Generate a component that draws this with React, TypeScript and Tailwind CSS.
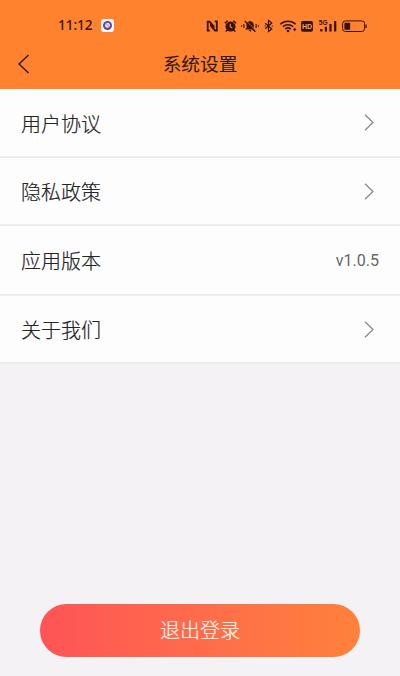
import React from "react";

const rows = [
  { label: "用户协议", height: "h-[69px]" },
  { label: "隐私政策", height: "h-[68px]" },
  { label: "应用版本", height: "h-[70px]", value: "v1.0.5" },
  { label: "关于我们", height: "h-[68px]" },
];

function StatusIcons() {
  return (
    <svg width="164" height="16" viewBox="0 0 164 16" fill="none" stroke="#351406">
      {/* NFC */}
      <path d="M4.8 12.7H2.7V3.6H4.5L8.6 8.2V10.8M9.7 3.4H11.8V12.5H10L5.9 7.9V5.4" strokeWidth="1.8" />

      {/* Alarm */}
      <circle cx="25.5" cy="8.6" r="5" fill="#351406" stroke="none" />
      <path d="M19.8 5.2L22.6 2.8M31.2 5.2L28.4 2.8M22 12L20.8 13.6M29 12L30.2 13.6" strokeWidth="1.5" />
      <path d="M25.3 5.8V8.8L27.3 10" stroke="#ff822e" strokeWidth="1.1" />

      {/* Muted bell */}
      <path d="M40.2 11.6L41.5 10V6.8C41.5 4.5 43 3.5 45 3.1C47.3 3.5 48.7 4.7 48.7 6.8V10L50 11.6ZM43.5 12.3H46.8L45.2 13.8Z" fill="#351406" stroke="none" />
      <path d="M41.2 2.8L51.2 13" stroke="#ff822e" strokeWidth=".8" />
      <path d="M39.8 3L50.4 13.7" strokeWidth="1.3" />
      <path d="M38.9 6V10M36.7 7.2V8.8M51.1 6V10M53.3 7.2V8.8" strokeWidth="1.1" />

      {/* Bluetooth */}
      <path d="M60.2 5.2L66.8 11L63.5 13.5V2.5L66.8 5L60.2 10.8" strokeWidth="1.2" />
      <path d="M59.7 8H60.9M66.7 8H67.9" strokeWidth="1.1" />

      {/* Wi-Fi */}
      <path d="M75.3 6.3C79.5 2.2 86.5 2.2 90.7 6.3M77.8 8.8C80.8 5.9 85.2 5.9 88.2 8.8M80.2 11.1C82 9.5 84 9.5 85.8 11.1" strokeWidth="1.5" />
      <circle cx="83" cy="13" r="1.3" fill="#351406" stroke="none" />
      <path d="M89.7 9.8L91.3 11.5L89.7 13.2L88.1 11.5Z" fill="#351406" stroke="none" />

      {/* HD */}
      <rect x="96" y="3" width="12" height="10.8" rx="2" fill="#351406" stroke="none" />
      <text x="102" y="11" textAnchor="middle" fill="#ff9b58" stroke="none" className="font-['Liberation_Sans'] text-[7px] font-bold">HD</text>

      {/* Signal */}
      <text x="113.8" y="7" fill="#351406" stroke="none" className="font-['Liberation_Sans'] text-[6.5px] font-bold">5G</text>
      <path d="M116.3 11V13.5M120.9 8.8V13.5M125.5 6V13.5M130.2 3V13.5" strokeWidth="2.2" />

      {/* Battery */}
      <rect x="137.6" y="2.9" width="22" height="10.6" rx="2.8" />
      <rect x="139.4" y="4.7" width="5.8" height="7" rx="1" fill="#351406" stroke="none" />
      <path d="M161 6.5V10" strokeWidth="1.2" />
    </svg>
  );
}

function App() {
  return (
    <div className="flex flex-col w-[400px] h-[676px] bg-[#f4f2f5] font-['Noto_Sans_CJK_SC',sans-serif]">
      <header className="h-[89px] bg-[#ff822e]">
        <div className="flex items-center h-[51px] pl-[58px] pr-[31px]">
          <span className="w-[43px] font-['Noto_Sans',sans-serif] text-[13.5px] font-medium text-[#351406]">
            11:12
          </span>
          <svg width="13" height="13" viewBox="0 0 13 13">
            <rect width="13" height="13" rx="3" fill="#fff8fb" />
            <circle cx="6.5" cy="6.5" r="4.5" fill="#5e469d" />
            <circle cx="6.5" cy="6.3" r="2.5" fill="#e6def5" />
            <path d="M4 3.8L9 8" stroke="#8b78bd" strokeWidth=".8" />
          </svg>
          <div className="ml-auto">
            <StatusIcons />
          </div>
        </div>

        <div className="flex items-center h-[26px] pl-[17px]">
          <svg width="13" height="20" viewBox="0 0 13 20" fill="none" stroke="#2c1710" strokeWidth="1.4">
            <path d="M11.5 1L2 10L11.5 19" />
          </svg>
          <h1 className="w-[340px] pb-0.5 text-center text-[18.7px] leading-[24px] text-[#2c1710]">
            系统设置
          </h1>
        </div>
      </header>

      <main className="flex flex-col">
        {rows.map((row) => (
          <div
            key={row.label}
            className={`${row.height} flex items-center justify-between border-b-2 border-[#ececed] bg-[#fdfdfd] pt-[2px] pl-[21px]`}
          >
            <span className="text-[20px] leading-[30px] font-light text-[#252525] [-webkit-text-stroke:0.2px_#252525]">
              {row.label}
            </span>
            {row.value ? (
              <span className="mr-[21px] font-[Roboto,sans-serif] text-[16px] text-[#666666]">
                {row.value}
              </span>
            ) : (
              <svg className="mr-[26px] mb-0.5" width="10" height="17" viewBox="0 0 10 17" fill="none" stroke="#858585" strokeWidth="1.2">
                <path d="M1 .7L9 8.5L1 16.3" />
              </svg>
            )}
          </div>
        ))}
      </main>

      <button className="mx-10 mt-auto mb-[19px] h-[53px] rounded-full bg-linear-to-r from-[#ff5356] to-[#ff813b] pb-px text-[20px] leading-[30px] font-light text-[#fff5ed] [-webkit-text-stroke:0.2px_#fff5ed]">
        退出登录
      </button>
    </div>
  );
}

export default App;
